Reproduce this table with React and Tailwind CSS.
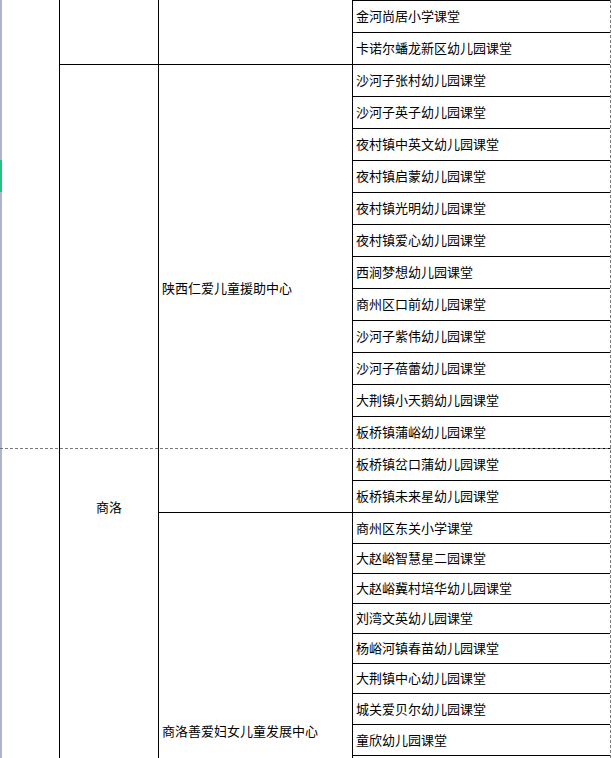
import React from "react";

const schools = [
  "金河尚居小学课堂",
  "卡诺尔蟠龙新区幼儿园课堂",
  "沙河子张村幼儿园课堂",
  "沙河子英子幼儿园课堂",
  "夜村镇中英文幼儿园课堂",
  "夜村镇启蒙幼儿园课堂",
  "夜村镇光明幼儿园课堂",
  "夜村镇爱心幼儿园课堂",
  "西涧梦想幼儿园课堂",
  "商州区口前幼儿园课堂",
  "沙河子紫伟幼儿园课堂",
  "沙河子蓓蕾幼儿园课堂",
  "大荆镇小天鹅幼儿园课堂",
  "板桥镇蒲峪幼儿园课堂",
  "板桥镇岔口蒲幼儿园课堂",
  "板桥镇未来星幼儿园课堂",
  "商州区东关小学课堂",
  "大赵峪智慧星二园课堂",
  "大赵峪冀村培华幼儿园课堂",
  "刘湾文英幼儿园课堂",
  "杨峪河镇春苗幼儿园课堂",
  "大荆镇中心幼儿园课堂",
  "城关爱贝尔幼儿园课堂",
  "童欣幼儿园课堂",
  "",
];

export default function App() {
  return (
    <div
      className="relative w-[612px] h-[758px] overflow-hidden bg-white text-black text-[13px] leading-none"
      style={{ fontFamily: '"Noto Sans CJK SC", "Liberation Sans", sans-serif' }}
    >
      {/* sheet grid */}
      <div className="grid grid-cols-[59px_99px_194px_258px_2px] grid-rows-[repeat(16,32px)_31px_30px_30px_30px_30px_30px_31px_31px_195px]">
        {/* region column */}
        <div className="col-start-1 row-start-1 row-end-26 border-l-2 border-[#a9b6cc]" />

        {/* city column */}
        <div className="col-start-2 row-start-1 row-end-3 border-l border-black" />
        <div className="col-start-2 row-start-3 row-end-26 border-l border-t border-black flex items-center justify-center pb-[3px]">
          商洛
        </div>

        {/* org column */}
        <div className="col-start-3 row-start-1 row-end-3 border-l border-black" />
        <div className="col-start-3 row-start-3 row-end-17 border-l border-t border-black flex items-center pl-[3px] pb-[2px]">
          陕西仁爱儿童援助中心
        </div>
        <div className="col-start-3 row-start-17 row-end-26 border-l border-t border-black flex items-center pl-[3px] pb-[2px]">
          商洛善爱妇女儿童发展中心
        </div>

        {/* classroom column */}
        {schools.map((name, i) => (
          <div
            key={i}
            className="col-start-4 border-l border-t border-black flex items-center pl-[3px] pb-[2px]"
            style={{ gridRowStart: i + 1 }}
          >
            {name}
          </div>
        ))}
      </div>

      {/* frozen-pane marker on the left edge */}
      <div className="absolute left-0 top-[160px] w-[2px] h-[32px] bg-[#1fc47d]" />

      {/* page break lines */}
      <div className="absolute left-0 top-[448px] w-[611px] h-px bg-[repeating-linear-gradient(90deg,#7a7a7a_0_3px,transparent_3px_5px)]" />
      <div className="absolute left-[610px] top-0 w-px h-full bg-[repeating-linear-gradient(180deg,#7a7a7a_0_3px,transparent_3px_5px)]" />
    </div>
  );
}
